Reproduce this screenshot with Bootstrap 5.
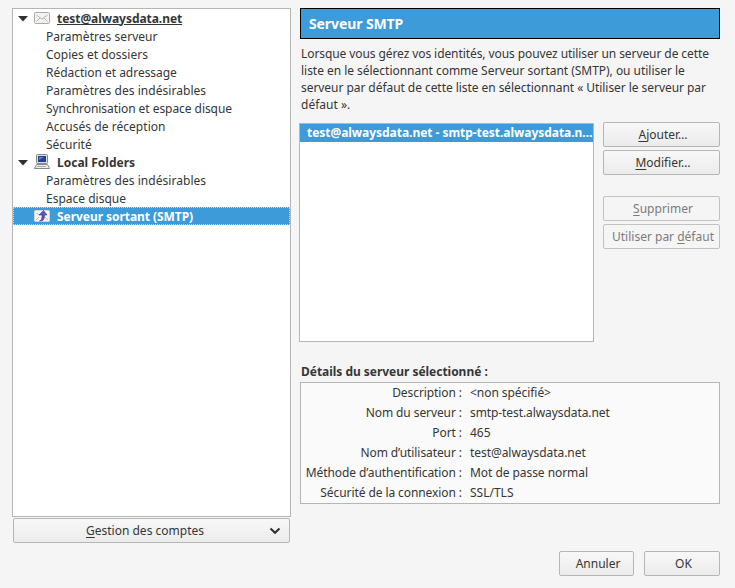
<!DOCTYPE html>
<html lang="fr">
<head>
<meta charset="utf-8">
<meta name="viewport" content="width=device-width, initial-scale=1">
<title>Paramètres des comptes</title>
<link href="https://cdn.jsdelivr.net/npm/bootstrap@5.3.0/dist/css/bootstrap.min.css" rel="stylesheet">
<style>
body{font:12px/18px "Noto Sans",sans-serif;color:#363636;background:#f5f5f5;width:735px;height:588px;overflow:hidden}
.dialog{padding:8px 15px 0 12px;height:551px}
.sidebar{width:279px;margin-right:8px}
.tree{height:509px;background:#fff;border:1px solid #b6b6b6}
.tree-row{height:18px;white-space:nowrap;line-height:19px}
.tree-leaf{padding-left:33px}
.arrow{width:10px;height:6px;margin:1px 6px 0 5px}
.tree-icon{width:16px;height:16px;margin-right:7px}
.picked{background:#3d9bda;color:#fff}
.tree .picked{outline:1px dotted #ffe066;outline-offset:-1px;padding-left:21px}
.snug-1{letter-spacing:-.03px}
.snug-2{letter-spacing:-.055px}
.snug-3{letter-spacing:-.085px}
.loose-1{letter-spacing:.04px}
.btn-gtk{--bs-btn-font-size:12px;--bs-btn-line-height:18px;--bs-btn-padding-x:0;--bs-btn-padding-y:0;--bs-btn-border-radius:2px;--bs-btn-color:#363636;--bs-btn-border-color:#b6b6b6;--bs-btn-disabled-color:#7c7c7c;--bs-btn-disabled-border-color:#c2c2c2;--bs-btn-disabled-opacity:1;height:25px;padding-left:3px;background:linear-gradient(#f8f8f8,#ebebeb);white-space:nowrap}
.btn-gtk:disabled{background:#f5f5f5}
.btn-gtk u{text-underline-offset:2px}
.btn-accounts{width:277px;margin:1px 0 0 1px;padding-right:8px}
.btn-accounts span{padding-left:4px}
.pane{width:421px}
.title-bar{height:31px;border:1px solid #000;margin-left:1px;padding-left:8px;font-size:14px;line-height:29px;letter-spacing:-.1px}
.intro{line-height:17px;margin:6px 0 10px 2px;white-space:nowrap}
.servers{width:295px;height:219px;background:#fff;border:1px solid #b6b6b6}
.server-row{height:18px;line-height:17px;padding-left:7px;letter-spacing:-.04px}
.actions{width:117px;margin-top:-1px}
.actions .btn-gtk{margin-bottom:3px}
.actions .btn-gtk:nth-child(2){margin-bottom:21px}
.details-title{font-size:12px;line-height:18px;margin:21px 0 1px 2px;letter-spacing:-.03px}
.details{height:122px;margin-left:1px;background:#fafafa;border:1px solid #b6b6b6}
.detail-row{height:20px;line-height:20px}
.detail-label{width:161px;margin-right:8px;letter-spacing:-.085px}
.w-cancel{width:75px}
.w-ok{width:76px}
.footer-bar{padding-right:15px;gap:10px}
</style>
</head>
<body>
<main class="dialog d-flex">
  <aside class="sidebar flex-shrink-0">
    <div class="tree">
      <div class="tree-row d-flex align-items-center fw-bold">
        <svg class="arrow" viewBox="0 0 10 6"><path d="M0 0h10L5 5.600z" fill="#303030"/></svg>
        <svg class="tree-icon" viewBox="0 0 16 16"><rect x=".5" y="2.500" width="15" height="11" rx="1" fill="#f3f3f1" stroke="#aaa"/><path d="M2.500 5L8 9l5.500-4M2.500 11.500L6 8m4 0l3.500 3.500" fill="none" stroke="#b5b5b5"/></svg>
        <u class="snug-2">test@alwaysdata.net</u>
      </div>
      <div class="tree-row tree-leaf loose-1">Paramètres serveur</div>
      <div class="tree-row tree-leaf">Copies et dossiers</div>
      <div class="tree-row tree-leaf snug-1">Rédaction et adressage</div>
      <div class="tree-row tree-leaf loose-1">Paramètres des indésirables</div>
      <div class="tree-row tree-leaf snug-2">Synchronisation et espace disque</div>
      <div class="tree-row tree-leaf loose-1">Accusés de réception</div>
      <div class="tree-row tree-leaf">Sécurité</div>
      <div class="tree-row d-flex align-items-center fw-bold">
        <svg class="arrow" viewBox="0 0 10 6"><path d="M0 0h10L5 5.600z" fill="#303030"/></svg>
        <svg class="tree-icon" viewBox="0 0 16 16"><rect x="2.500" y=".5" width="11" height="9" rx="1" fill="#ddd" stroke="#888"/><rect x="4" y="2" width="8" height="6" fill="#22428f"/><path d="M5 3h5L5 6z" fill="#637fc0"/><path d="M2.500 10.500h11l2 4H.5z" fill="#eee" stroke="#888"/><path d="M3 12.500h9" stroke="#aaa"/></svg>
        <span>Local Folders</span>
      </div>
      <div class="tree-row tree-leaf loose-1">Paramètres des indésirables</div>
      <div class="tree-row tree-leaf">Espace disque</div>
      <div class="tree-row d-flex align-items-center fw-bold picked">
        <svg class="tree-icon" viewBox="0 0 16 16"><rect x=".5" y="2.500" width="15" height="11" rx="1" fill="#f5f5f5" stroke="#d5d5d5"/><path d="M2 12l3-3M14 12l-3-3M2.500 5l3 2" stroke="#bbb"/><path d="M5.500 13C8 12.500 8 10 8 7H5l4.500-4.500L13 7h-2.500c0 4-1 6.500-5 6z" fill="#6252b5" stroke="#42368c" stroke-width=".6"/></svg>
        <span class="snug-2">Serveur sortant (SMTP)</span>
      </div>
    </div>
    <button class="btn btn-gtk btn-accounts d-flex align-items-center">
      <span class="flex-grow-1 text-center"><u>G</u>estion des comptes</span>
      <svg width="12" height="8" viewBox="0 0 12 8"><path d="M1.500 1.500L6 5.800l4.500-4.300" fill="none" stroke="#303030" stroke-width="2"/></svg>
    </button>
  </aside>
  <section class="pane">
    <h1 class="title-bar picked fw-bold mb-0">Serveur SMTP</h1>
    <p class="intro"><span class="snug-3">Lorsque vous gérez vos identités, vous pouvez utiliser un serveur de cette</span><br><span class="snug-1">liste en le sélectionnant comme Serveur sortant (SMTP), ou utiliser le</span><br><span class="snug-2">serveur par défaut de cette liste en sélectionnant « Utiliser le serveur par</span><br>défaut ».</p>
    <div class="d-flex justify-content-between">
      <div class="servers"><div class="server-row picked fw-bold text-nowrap overflow-hidden">test@alwaysdata.net - smtp-test.alwaysdata.n…</div></div>
      <div class="actions">
        <button class="btn btn-gtk d-block w-100"><u>A</u>jouter…</button>
        <button class="btn btn-gtk d-block w-100"><u>M</u>odifier…</button>
        <button class="btn btn-gtk d-block w-100" disabled><u>S</u>upprimer</button>
        <button class="btn btn-gtk d-block w-100" disabled>Utiliser par <u>d</u>éfaut</button>
      </div>
    </div>
    <h2 class="details-title fw-bold">Détails du serveur sélectionné :</h2>
    <div class="details">
      <div class="detail-row d-flex"><span class="detail-label text-end">Description :</span><span class="snug-2">&lt;non spécifié&gt;</span></div>
      <div class="detail-row d-flex"><span class="detail-label text-end">Nom du serveur :</span><span class="snug-3">smtp-test.alwaysdata.net</span></div>
      <div class="detail-row d-flex"><span class="detail-label text-end">Port :</span><span>465</span></div>
      <div class="detail-row d-flex"><span class="detail-label text-end">Nom d’utilisateur :</span><span class="snug-2">test@alwaysdata.net</span></div>
      <div class="detail-row d-flex"><span class="detail-label text-end">Méthode d’authentification :</span><span class="snug-2">Mot de passe normal</span></div>
      <div class="detail-row d-flex"><span class="detail-label text-end">Sécurité de la connexion :</span><span>SSL/TLS</span></div>
    </div>
  </section>
</main>
<footer class="footer-bar d-flex justify-content-end">
  <button class="btn btn-gtk w-cancel">Annuler</button>
  <button class="btn btn-gtk w-ok">OK</button>
</footer>
<script src="https://cdn.jsdelivr.net/npm/bootstrap@5.3.0/dist/js/bootstrap.bundle.min.js"></script>
</body>
</html>
